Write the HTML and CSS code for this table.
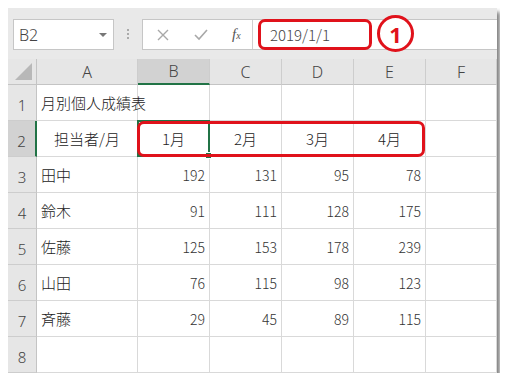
FILE: index.html
```
<!DOCTYPE html>
<html lang="ja">
<head>
    <meta charset="UTF-8">
    <title>月別個人成績表</title>
    <link rel="stylesheet" href="styles.css">
</head>
<body>
    <div class="sheet-window">
        <div class="formula-bar">
            <div class="name-box">
                <span>B2</span>
                <span class="caret"></span>
            </div>
            <div class="grip"></div>
            <div class="formula-input">
                <div class="fx-buttons">
                    <svg width="14" height="14" viewBox="0 0 14 14"><path d="M2 2 L12 12 M12 2 L2 12" stroke="#a8a8a8" stroke-width="1.4" fill="none"/></svg>
                    <svg width="16" height="14" viewBox="0 0 16 14"><path d="M2 7 L6 11 L14 2" stroke="#a8a8a8" stroke-width="1.6" fill="none"/></svg>
                    <span class="fx">f<sub>x</sub></span>
                </div>
                <div class="formula-value">2019/1/1</div>
            </div>
            <div class="callout formula-callout"></div>
            <div class="badge">1</div>
        </div>

        <div class="grid">
            <div class="hdr corner"><span class="tri"></span></div>
            <div class="hdr">A</div>
            <div class="hdr active-col">B</div>
            <div class="hdr">C</div>
            <div class="hdr">D</div>
            <div class="hdr">E</div>
            <div class="hdr">F</div>

            <div class="rowno">1</div>
            <div class="cell">月別個人成績表</div>
            <div class="cell"></div><div class="cell"></div><div class="cell"></div><div class="cell"></div><div class="cell"></div>

            <div class="rowno active-row">2</div>
            <div class="cell center">担当者/月</div>
            <div class="cell center">1月</div>
            <div class="cell center">2月</div>
            <div class="cell center">3月</div>
            <div class="cell center">4月</div>
            <div class="cell"></div>

            <div class="rowno">3</div>
            <div class="cell">田中</div>
            <div class="cell num">192</div><div class="cell num">131</div><div class="cell num">95</div><div class="cell num">78</div><div class="cell"></div>

            <div class="rowno">4</div>
            <div class="cell">鈴木</div>
            <div class="cell num">91</div><div class="cell num">111</div><div class="cell num">128</div><div class="cell num">175</div><div class="cell"></div>

            <div class="rowno">5</div>
            <div class="cell">佐藤</div>
            <div class="cell num">125</div><div class="cell num">153</div><div class="cell num">178</div><div class="cell num">239</div><div class="cell"></div>

            <div class="rowno">6</div>
            <div class="cell">山田</div>
            <div class="cell num">76</div><div class="cell num">115</div><div class="cell num">98</div><div class="cell num">123</div><div class="cell"></div>

            <div class="rowno">7</div>
            <div class="cell">斉藤</div>
            <div class="cell num">29</div><div class="cell num">45</div><div class="cell num">89</div><div class="cell num">115</div><div class="cell"></div>

            <div class="rowno">8</div>
            <div class="cell"></div><div class="cell"></div><div class="cell"></div><div class="cell"></div><div class="cell"></div><div class="cell"></div>
        </div>

        <!-- selection and highlight overlays -->
        <div class="selection"><span class="handle"></span></div>
        <div class="callout row-callout"></div>
    </div>
</body>
</html>
```

FILE: styles.css
```
body {
    margin: 8px;
    background: #fff;
    font-family: "Noto Sans CJK JP", "Noto Sans", sans-serif;
    color: #222;
}
.sheet-window {
    position: relative;
    width: 489px;
    height: 365px;
    background: #fff;
    box-shadow: 3px 4px 4px rgba(0, 0, 0, 0.5);
}
.formula-bar {
    height: 51px;
    box-sizing: border-box;
    background: #e9e9e9;
    display: flex;
    align-items: flex-start;
    padding: 11px 0 0 5px;
}
.name-box {
    width: 101px;
    height: 31px;
    box-sizing: border-box;
    background: #fff;
    border: 1px solid #c6c6c6;
    display: flex;
    align-items: center;
    justify-content: space-between;
    padding: 0 6px 0 5px;
    font-family: "Noto Sans", sans-serif;
    font-weight: 300;
    font-size: 16px;
    color: #444;
}
.caret {
    width: 0;
    height: 0;
    border-left: 4px solid transparent;
    border-right: 4px solid transparent;
    border-top: 4px solid #777;
}
.grip {
    width: 2px;
    height: 12px;
    margin: 9px 13px 0 13px;
    background: radial-gradient(circle, #aaa 0.9px, transparent 1.1px) 0 0 / 2px 4px;
}
.formula-input {
    flex: 1;
    height: 31px;
    box-sizing: border-box;
    background: #fff;
    border-top: 1px solid #c6c6c6;
    border-bottom: 1px solid #c6c6c6;
    border-left: 1px solid #c6c6c6;
    display: flex;
    align-items: center;
}
.fx-buttons {
    width: 110px;
    height: 100%;
    box-sizing: border-box;
    border-right: 1px solid #d0d0d0;
    display: flex;
    align-items: center;
    gap: 23px;
    padding-left: 13px;
}
.fx {
    font-family: "Liberation Serif", serif;
    font-style: italic;
    font-size: 15px;
    color: #555;
}
.fx sub {
    font-size: 10px;
    vertical-align: 0;
}
.formula-value {
    padding-left: 17px;
    font-size: 15px;
    font-weight: 300;
    color: #444;
}
.callout {
    position: absolute;
    box-sizing: border-box;
    border: 3px solid #e0121b;
    border-radius: 7px;
}
.formula-callout {
    left: 250px;
    top: 11px;
    width: 114px;
    height: 31px;
}
.row-callout {
    left: 129px;
    top: 113px;
    width: 288px;
    height: 36px;
}
.badge {
    position: absolute;
    left: 369px;
    top: 7px;
    width: 37px;
    height: 37px;
    box-sizing: border-box;
    border: 3px solid #e0121b;
    border-radius: 50%;
    background: #fff;
    color: #e0121b;
    font-family: "Noto Sans", sans-serif;
    font-weight: bold;
    font-size: 22px;
    display: flex;
    align-items: center;
    justify-content: center;
}
.grid {
    display: grid;
    grid-template-columns: 29px 101px 72px 72px 72px 72px 71px;
    grid-template-rows: 26px repeat(8, 36px);
}
.hdr {
    background: #e6e6e6;
    border-right: 1px solid #cdcdcd;
    border-bottom: 1px solid #c4c4c4;
    display: flex;
    align-items: center;
    justify-content: center;
    font-family: "Noto Sans", sans-serif;
    font-weight: 300;
    font-size: 16px;
    color: #444;
}
.corner {
    position: relative;
    border-right: 1px solid #c4c4c4;
}
.tri {
    position: absolute;
    right: 4px;
    bottom: 4px;
    width: 0;
    height: 0;
    border-left: 17px solid transparent;
    border-bottom: 17px solid #b8b8b8;
}
.active-col {
    background: #d2d2d2;
    border-bottom: 2px solid #217346;
}
.rowno {
    background: #e6e6e6;
    border-right: 1px solid #c4c4c4;
    border-bottom: 1px solid #cdcdcd;
    display: flex;
    align-items: center;
    justify-content: center;
    padding-top: 5px;
    font-family: "Noto Sans", sans-serif;
    font-weight: 300;
    font-size: 15px;
    color: #444;
}
.active-row {
    background: #d2d2d2;
    border-right: 2px solid #217346;
}
.cell {
    border-right: 1px solid #d9d9d9;
    border-bottom: 1px solid #d9d9d9;
    display: flex;
    align-items: center;
    padding: 0 4px;
    font-size: 15px;
    font-weight: 300;
    color: #222;
    white-space: nowrap;
}
.center {
    justify-content: center;
}
.num {
    justify-content: flex-end;
    font-size: 14px;
    color: #333;
}
.selection {
    position: absolute;
    left: 129px;
    top: 112px;
    width: 73px;
    height: 37px;
    box-sizing: border-box;
    border: 2px solid #217346;
}
.handle {
    position: absolute;
    right: -4px;
    bottom: -4px;
    width: 5px;
    height: 5px;
    background: #217346;
    border: 1px solid #fff;
}
```
